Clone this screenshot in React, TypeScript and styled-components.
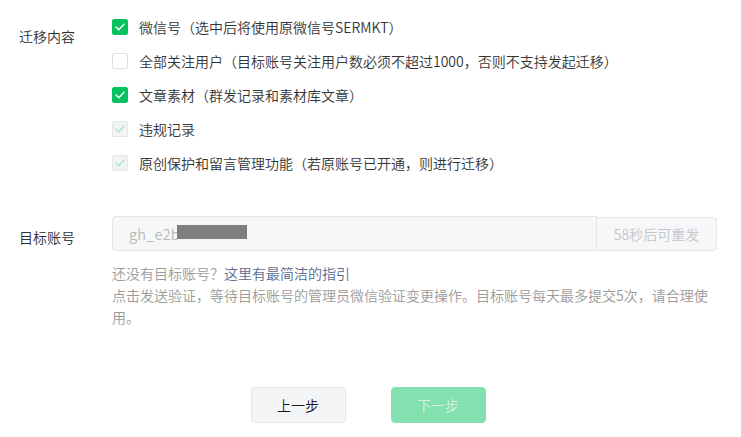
import React from "react";
import styled, { createGlobalStyle } from "styled-components";

const GlobalStyle = createGlobalStyle`
  html, body {
    margin: 0;
    padding: 0;
    background: #ffffff;
  }
  body {
    font-family: "Noto Sans CJK SC", "Noto Sans", sans-serif;
  }
  * { box-sizing: border-box; }
`;

const Page = styled.div`
  width: 741px;
  height: 437px;
  padding: 10px 24px 0 19px;
  font-size: 14px;
  font-weight: 350;
  color: #353535;
`;

const FormRow = styled.div<{ $mt?: number }>`
  display: flex;
  margin-top: ${(p) => p.$mt ?? 0}px;
`;

const Label = styled.div<{ $pt: number; $lh: number }>`
  width: 93px;
  flex: none;
  padding-top: ${(p) => p.$pt}px;
  line-height: ${(p) => p.$lh}px;
  color: #303030;
`;

const Content = styled.div`
  flex: 1;
  min-width: 0;
`;

const CheckList = styled.ul`
  list-style: none;
  margin: 0;
  padding: 0;
`;

const CheckItem = styled.li`
  display: flex;
  align-items: center;
  gap: 11px;
  height: 34px;
  line-height: 20px;
  color: #353535;
  white-space: nowrap;
`;

type BoxState = "checked" | "unchecked" | "disabled";

const Box = styled.span<{ $state: BoxState }>`
  width: 16px;
  height: 16px;
  flex: none;
  border-radius: 2px;
  display: inline-flex;
  align-items: center;
  justify-content: center;
  background: ${(p) =>
    p.$state === "checked" ? "#07c160" : p.$state === "disabled" ? "#f2f3f4" : "#ffffff"};
  border: 1px solid
    ${(p) =>
      p.$state === "checked" ? "#07c160" : p.$state === "disabled" ? "#e4e6e8" : "#dcdee0"};
`;

const Checkbox: React.FC<{ state: BoxState }> = ({ state }) => (
  <Box $state={state}>
    {state !== "unchecked" && (
      <svg width="10" height="8" viewBox="0 0 10 8" fill="none">
        <path
          d="M1 4.1 L3.8 6.8 L9 1.3"
          stroke={state === "checked" ? "#ffffff" : "#a8e4c4"}
          strokeWidth="1.4"
          strokeLinecap="round"
          strokeLinejoin="round"
        />
      </svg>
    )}
  </Box>
);

const InputGroup = styled.div`
  display: flex;
  height: 35px;
`;

const InputBox = styled.div`
  position: relative;
  flex: 1;
  background: #f6f7f8;
  border: 1px solid #e4e6e9;
  border-radius: 4px 0 0 4px;
  padding: 0 16px;
  line-height: 33px;
  color: #b7b7b7;
  font-size: 14.5px;
  letter-spacing: 0.2px;
`;

const Redaction = styled.span`
  position: absolute;
  left: 64px;
  top: 8px;
  width: 70px;
  height: 14px;
  background: #7f7f7f;
`;

const SendButton = styled.button`
  width: 120px;
  flex: none;
  height: 34px;
  margin-top: 1px;
  background: #f6f7f8;
  border: 1px solid #e4e6e9;
  border-left: none;
  border-radius: 0 4px 4px 0;
  color: #c4c6c8;
  font-family: inherit;
  font-weight: inherit;
  font-size: 14px;
  padding: 0;
`;

const Help = styled.div`
  margin-top: 11px;
  line-height: 22px;
  color: #9a9a9a;
  font-size: 14px;
`;

const HelpLine = styled.p`
  margin: 0;
`;

const Link = styled.a`
  color: #576b95;
  text-decoration: none;
`;

const Actions = styled.div`
  display: flex;
  justify-content: center;
  gap: 45px;
  margin-top: 59px;
`;

const ActionButton = styled.button<{ $primary?: boolean }>`
  width: 95px;
  height: 36px;
  border-radius: 4px;
  font-family: inherit;
  font-weight: inherit;
  font-size: 14px;
  padding: 0;
  border: 1px solid ${(p) => (p.$primary ? "#83e0af" : "#e3e5e8")};
  background: ${(p) => (p.$primary ? "#83e0af" : "#f4f5f7")};
  color: ${(p) => (p.$primary ? "rgba(255,255,255,0.65)" : "#1a1a1a")};
`;

const options: { text: string; state: BoxState }[] = [
  { text: "微信号（选中后将使用原微信号SERMKT）", state: "checked" },
  { text: "全部关注用户（目标账号关注用户数必须不超过1000，否则不支持发起迁移）", state: "unchecked" },
  { text: "文章素材（群发记录和素材库文章）", state: "checked" },
  { text: "违规记录", state: "disabled" },
  { text: "原创保护和留言管理功能（若原账号已开通，则进行迁移）", state: "disabled" },
];

export default function App() {
  return (
    <>
      <GlobalStyle />
      <Page>
        <FormRow>
          <Label $pt={16} $lh={20}>迁移内容</Label>
          <Content>
            <CheckList>
              {options.map((o) => (
                <CheckItem key={o.text}>
                  <Checkbox state={o.state} />
                  <span>{o.text}</span>
                </CheckItem>
              ))}
            </CheckList>
          </Content>
        </FormRow>
        <FormRow $mt={36}>
          <Label $pt={3} $lh={36}>目标账号</Label>
          <Content>
            <InputGroup>
              <InputBox>
                gh_e2b
                <Redaction />
              </InputBox>
              <SendButton>58秒后可重发</SendButton>
            </InputGroup>
            <Help>
              <HelpLine>
                还没有目标账号？<Link href="#">这里有最简洁的指引</Link>
              </HelpLine>
              <HelpLine>
                点击发送验证，等待目标账号的管理员微信验证变更操作。目标账号每天最多提交5次，请合理使用。
              </HelpLine>
            </Help>
          </Content>
        </FormRow>
        <Actions>
          <ActionButton>上一步</ActionButton>
          <ActionButton $primary>下一步</ActionButton>
        </Actions>
      </Page>
    </>
  );
}
